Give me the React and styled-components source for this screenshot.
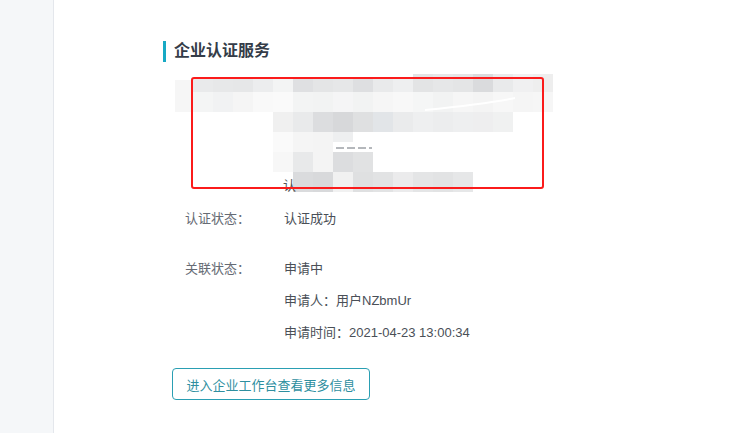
import React from 'react'
import styled, { createGlobalStyle } from 'styled-components'

const GlobalStyle = createGlobalStyle`
  html, body {
    margin: 0;
    padding: 0;
    background: #ffffff;
  }
  body {
    font-family: "Liberation Sans", "Noto Sans CJK SC", sans-serif;
    font-size: 13px;
    color: #333;
  }
`

const Page = styled.div`
  display: flex;
  width: 737px;
  height: 433px;
  overflow: hidden;
`

const Sidebar = styled.aside`
  flex: 0 0 53px;
  background: #f5f7f9;
  border-right: 1px solid #e4e7ec;
`

const Main = styled.main`
  flex: 1;
  padding: 40px 0 0 109px;
`

const SectionTitle = styled.h2`
  display: flex;
  align-items: center;
  margin: 0;
  height: 22px;
  font-size: 16px;
  font-weight: 700;
  color: #343c48;
  line-height: 22px;

  &::before {
    content: '';
    width: 3px;
    height: 21px;
    margin-right: 8px;
    background: #17a9c4;
  }
`

const Masked = styled.div`
  position: relative;
  width: 380px;
  height: 122px;
  margin: 10px 0 0 12px;
`

const RedMark = styled.div`
  position: absolute;
  left: 16px;
  top: 5px;
  width: 353px;
  height: 112px;
  box-sizing: border-box;
  border: 2px solid #fb1b1b;
  border-radius: 3px;
`

const Info = styled.div`
  display: flex;
  flex-direction: column;
  gap: 30px;
  margin: 15px 0 0 22px;
`

const Row = styled.div`
  display: flex;
  align-items: flex-start;
`

const Label = styled.div`
  width: 99px;
  line-height: 20px;
  color: #666b74;
`

const Values = styled.div`
  display: flex;
  flex-direction: column;
  gap: 12px;
`

const Value = styled.div`
  line-height: 20px;
  color: #4a4f57;
`

const Button = styled.button`
  display: block;
  margin: 25px 0 0 9px;
  width: 198px;
  height: 32px;
  padding: 0;
  background: #fff;
  border: 1px solid #2a9fb3;
  border-radius: 4px;
  font-family: inherit;
  font-size: 13px;
  color: #2e8f9f;
  cursor: pointer;
`

const row1 = ['#e9eaeb', '#e7e8e9', '#e6e7e8', '#ecedee', '#f3f4f4', '#dfe0e2', '#e4e5e6', '#e6e7e8', '#dedfe1', '#e9eaeb', '#eeeff0', '#e3e4e5', '#e6e7e8', '#e4e5e6', '#dadbdd', '#e9eaeb', '#f0f0f1', '#eeeeee']
const row2 = ['#f4f5f5', '#f1f2f3', '#f5f5f5', '#f9f9f9', '#fafafa', '#f3f4f4', '#f2f3f3', '#f5f5f6', '#f2f3f3', '#f6f6f6', '#f8f8f8', '#f5f6f6', '#f2f3f3', '#f6f6f6', '#f4f4f4', '#f7f7f7', '#f5f5f5', '#f6f6f6']
const row3 = ['#f0f0f0', '#e9eaeb', '#dcdddf', '#d7d8da', '#dfe0e1', '#e2e5e8', '#eaebec', '#eeeff0', '#ecedee', '#eeeff0', '#eeeeef', '#f0f1f1']
const row4 = ['#fafafa', '#f5f5f5', '#f4f4f4', '#eeeff0']
const row5 = ['#e8e9ea', '#f4f4f4', '#dcdddf', '#e1e2e3']
const row6 = ['#dadbdd', '#d8d9db', '#f1f1f1', '#dfe0e1', '#e2e3e4', '#ebebec', '#e4e5e6', '#e2e3e4', '#e6e7e8']

const Mosaic = () => (
  <svg width="380" height="122" viewBox="0 0 380 122">
    <rect x="0" y="8" width="18" height="32" fill="#f6f6f6" />
    {row1.map((c, i) => <rect key={'a' + i} x={18 + i * 20} y={i > 10 ? 2 : 6} width="20" height={i > 10 ? 18 : 14} fill={c} />)}
    {row2.map((c, i) => <rect key={'b' + i} x={18 + i * 20} y="20" width="20" height="20" fill={c} />)}
    <path d="M250 38 C 290 34, 320 30, 340 26" stroke="#fff" strokeWidth="2" fill="none" />
    {row3.map((c, i) => <rect key={'c' + i} x={98 + i * 20} y="40" width="20" height="20" fill={c} />)}
    {row4.map((c, i) => <rect key={'d' + i} x={98 + i * 20} y="60" width="20" height={i === 3 ? 10 : 20} fill={c} />)}
    <path d="M161 76 H197" stroke="#6b7079" strokeWidth="1" strokeDasharray="8 3" />
    <rect x="98" y="80" width="20" height="20" fill="#f7f7f7" />
    {row5.map((c, i) => <rect key={'e' + i} x={118 + i * 20} y="80" width="20" height="20" fill={c} />)}
    {row6.map((c, i) => <rect key={'f' + i} x={118 + i * 20} y="100" width="20" height="20" fill={c} />)}
    <text x="108" y="118" fontSize="13" fill="#555" fontFamily="Noto Sans CJK SC, sans-serif">认</text>
  </svg>
)

export default function App() {
  return (
    <>
      <GlobalStyle />
      <Page>
        <Sidebar />
        <Main>
          <SectionTitle>企业认证服务</SectionTitle>
          <Masked>
            <Mosaic />
            <RedMark />
          </Masked>
          <Info>
            <Row>
              <Label>认证状态：</Label>
              <Values>
                <Value>认证成功</Value>
              </Values>
            </Row>
            <Row>
              <Label>关联状态：</Label>
              <Values>
                <Value>申请中</Value>
                <Value>申请人：用户NZbmUr</Value>
                <Value>申请时间：2021-04-23 13:00:34</Value>
              </Values>
            </Row>
          </Info>
          <Button>进入企业工作台查看更多信息</Button>
        </Main>
      </Page>
    </>
  )
}
